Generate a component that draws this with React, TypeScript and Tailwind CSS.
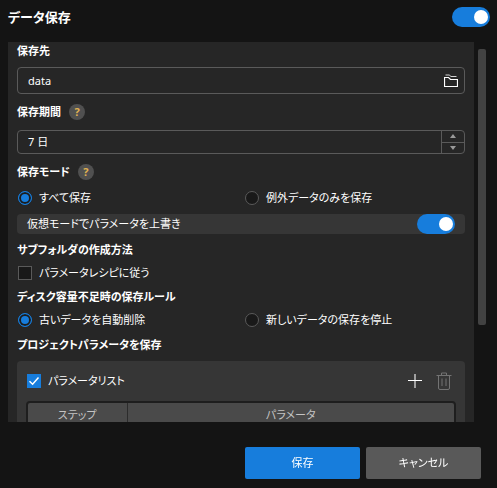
import { useState } from 'react';
import type { ReactNode } from 'react';

type ChoiceProps = {
  name: string;
  label: string;
  checked: boolean;
  onChange: () => void;
};

function Switch({ label, defaultChecked }: { label: string; defaultChecked?: boolean }) {
  return (
    <input
      type="checkbox"
      role="switch"
      aria-label={label}
      defaultChecked={defaultChecked}
      className="h-5 w-[38px] shrink-0 cursor-pointer appearance-none rounded-full bg-[#555555] p-[3px] before:block before:size-[14px] before:rounded-full before:bg-white checked:bg-[#177ddc] checked:before:ml-[19px]"
    />
  );
}

function Radio({ name, label, checked, onChange }: ChoiceProps) {
  return (
    <label className="flex h-[18px] items-center gap-[7px] pl-px">
      <input
        type="radio"
        name={name}
        checked={checked}
        onChange={onChange}
        className="size-[14px] shrink-0 appearance-none rounded-full border border-[#5a5a5a] bg-[#191919] checked:border-[#177ddc] checked:bg-[#177ddc] checked:shadow-[inset_0_0_0_2px_#1d1d1d]"
      />
      {label}
    </label>
  );
}

function Checkbox({ label, defaultChecked }: { label: string; defaultChecked?: boolean }) {
  return (
    <label className="flex h-[18px] items-center gap-[7px] pl-px">
      <span className="relative flex size-[14px] shrink-0">
        <input
          type="checkbox"
          defaultChecked={defaultChecked}
          className="peer size-[14px] appearance-none border border-[#5a5a5a] bg-[#191919] checked:border-[#177ddc] checked:bg-[#177ddc]"
        />
        <svg
          viewBox="0 0 14 14"
          className="pointer-events-none absolute inset-0 hidden size-[14px] peer-checked:block"
        >
          <path d="M2.5 7.2 L5.6 10.2 L11.5 3.6" fill="none" stroke="#fff" strokeWidth="1.5" />
        </svg>
      </span>
      {label}
    </label>
  );
}

function SectionTitle({ children, help }: { children: ReactNode; help?: boolean }) {
  return (
    <div className="flex h-[18px] items-center gap-2">
      <h2 className="font-bold">{children}</h2>
      {help && (
        <button
          type="button"
          aria-label="ヘルプ"
          className="flex size-4 items-center justify-center rounded-full bg-[#505050] font-bold text-[#e0b252]"
        >
          ?
        </button>
      )}
    </div>
  );
}

function FolderIcon() {
  return (
    <svg viewBox="0 0 14 14" className="size-[14px]" fill="none" stroke="currentColor">
      <path d="M0.5 12.5 V3.5 H4.5 L6.5 5.5 H13.5 V12.5 Z" strokeWidth="1.2" />
      <path d="M1.5 1 H5.2 L7 2.5 H12.5" strokeOpacity="0.8" />
    </svg>
  );
}

function TrashIcon() {
  return (
    <svg viewBox="0 0 16 18" className="h-[18px] w-4" fill="none" stroke="currentColor">
      <path d="M0.5 3.5 H15.5" />
      <path d="M5.5 3.5 V1 H10.5 V3.5" />
      <path d="M2.5 3.5 V16 Q2.5 17.5 4 17.5 H12 Q13.5 17.5 13.5 16 V3.5" />
      <path d="M6 6.5 V14 M10 6.5 V14" />
    </svg>
  );
}

export default function App() {
  const [days, setDays] = useState(7);
  const [mode, setMode] = useState('all');
  const [rule, setRule] = useState('delete');

  return (
    <div className="flex h-screen flex-col bg-[#141414] font-['Noto_Sans','Noto_Sans_CJK_JP',sans-serif] text-[11px] leading-4 text-white [font-feature-settings:'palt']">
      <header className="flex h-[42px] shrink-0 items-start justify-between pt-[7px] pr-[7px] pl-2">
        <h1 className="text-[13px] leading-5 font-bold">データ保存</h1>
        <Switch label="データ保存" defaultChecked />
      </header>

      <div className="flex min-h-0 flex-1 gap-1 pr-[11px] pl-2">
        <main className="flex-1 overflow-y-auto bg-[#262626] px-[9px] [scrollbar-width:none]">
          <SectionTitle>保存先</SectionTitle>
          <div className="mt-[7px] flex h-[27px] items-center rounded border border-[#5a5a5a] pr-1.5">
            <input
              type="text"
              aria-label="保存先"
              defaultValue="data"
              className="min-w-0 flex-1 bg-transparent px-2.5 outline-none"
            />
            <button type="button" aria-label="フォルダを選択">
              <FolderIcon />
            </button>
          </div>

          <div className="mt-[9px]">
            <SectionTitle help>保存期間</SectionTitle>
          </div>
          <div className="mt-[9px] flex h-6 rounded border border-[#5a5a5a]">
            <input
              type="text"
              role="spinbutton"
              aria-label="保存期間"
              aria-valuenow={days}
              value={`${days} 日`}
              onChange={(e) => setDays(parseInt(e.target.value, 10) || 1)}
              className="min-w-0 flex-1 bg-transparent px-2.5 outline-none"
            />
            <div className="flex w-[23px] flex-col divide-y divide-[#5a5a5a] border-l border-[#5a5a5a] text-[#999999]">
              <button
                type="button"
                aria-label="増やす"
                className="flex flex-1 items-center justify-center"
                onClick={() => setDays(days + 1)}
              >
                <svg viewBox="0 0 6 4" className="h-1 w-1.5" fill="currentColor">
                  <path d="M3 0 L6 4 H0 Z" />
                </svg>
              </button>
              <button
                type="button"
                aria-label="減らす"
                className="flex flex-1 items-center justify-center"
                onClick={() => setDays(Math.max(1, days - 1))}
              >
                <svg viewBox="0 0 6 4" className="h-1 w-1.5" fill="currentColor">
                  <path d="M0 0 H6 L3 4 Z" />
                </svg>
              </button>
            </div>
          </div>

          <div className="mt-[9px]">
            <SectionTitle help>保存モード</SectionTitle>
          </div>
          <div className="mt-2 grid grid-cols-2 gap-x-1.5">
            <Radio name="mode" label="すべて保存" checked={mode === 'all'} onChange={() => setMode('all')} />
            <Radio
              name="mode"
              label="例外データのみを保存"
              checked={mode === 'exception'}
              onChange={() => setMode('exception')}
            />
          </div>
          <div className="mt-[7px] flex h-5 items-center justify-between rounded bg-[#363636] px-2.5">
            <span>仮想モードでパラメータを上書き</span>
            <Switch label="仮想モードでパラメータを上書き" defaultChecked />
          </div>

          <div className="mt-[7px]">
            <SectionTitle>サブフォルダの作成方法</SectionTitle>
          </div>
          <div className="mt-[5px]">
            <Checkbox label="パラメータレシピに従う" />
          </div>

          <div className="mt-1.5">
            <SectionTitle>ディスク容量不足時の保存ルール</SectionTitle>
          </div>
          <div className="mt-[5px] grid grid-cols-2 gap-x-1.5">
            <Radio
              name="rule"
              label="古いデータを自動削除"
              checked={rule === 'delete'}
              onChange={() => setRule('delete')}
            />
            <Radio
              name="rule"
              label="新しいデータの保存を停止"
              checked={rule === 'stop'}
              onChange={() => setRule('stop')}
            />
          </div>

          <div className="mt-[7px]">
            <SectionTitle>プロジェクトパラメータを保存</SectionTitle>
          </div>
          <section className="mt-[7px] rounded bg-[#363636] px-[9px] pt-[11px] pb-[9px]">
            <div className="flex h-[18px] items-center justify-between">
              <Checkbox label="パラメータリスト" defaultChecked />
              <div className="flex items-center gap-[14px] pr-1">
                <button type="button" aria-label="追加">
                  <svg viewBox="0 0 14 14" className="size-[14px]" fill="none">
                    <path d="M7 0 V14" stroke="#a0a0a0" strokeWidth="2" />
                    <path d="M0 6.5 H14" stroke="#fff" />
                  </svg>
                </button>
                <button type="button" aria-label="削除" className="text-[#737373]">
                  <TrashIcon />
                </button>
              </div>
            </div>
            <div className="mt-[11px] rounded border-2 border-[#1e1e1e] bg-[#4a4a4a]">
              <table className="w-full table-fixed border-collapse text-[#c4c4c4]">
                <thead>
                  <tr className="h-6 border-b border-[#363636]">
                    <th className="w-[99px] border-r border-[#2c2c2c] font-normal">ステップ</th>
                    <th className="font-normal">パラメータ</th>
                  </tr>
                </thead>
              </table>
            </div>
          </section>
        </main>
        <div className="w-2 shrink-0 pt-[7px]">
          <div className="h-[74%] rounded-xs bg-[#424242]" />
        </div>
      </div>

      <footer className="flex h-[66px] shrink-0 items-end justify-end gap-1.5 pr-4 pb-[9px]">
        <button type="button" className="h-8 w-[115px] rounded-xs bg-[#177ddc]">
          保存
        </button>
        <button type="button" className="h-8 w-[115px] rounded-xs bg-[#595959]">
          キャンセル
        </button>
      </footer>
    </div>
  );
}
